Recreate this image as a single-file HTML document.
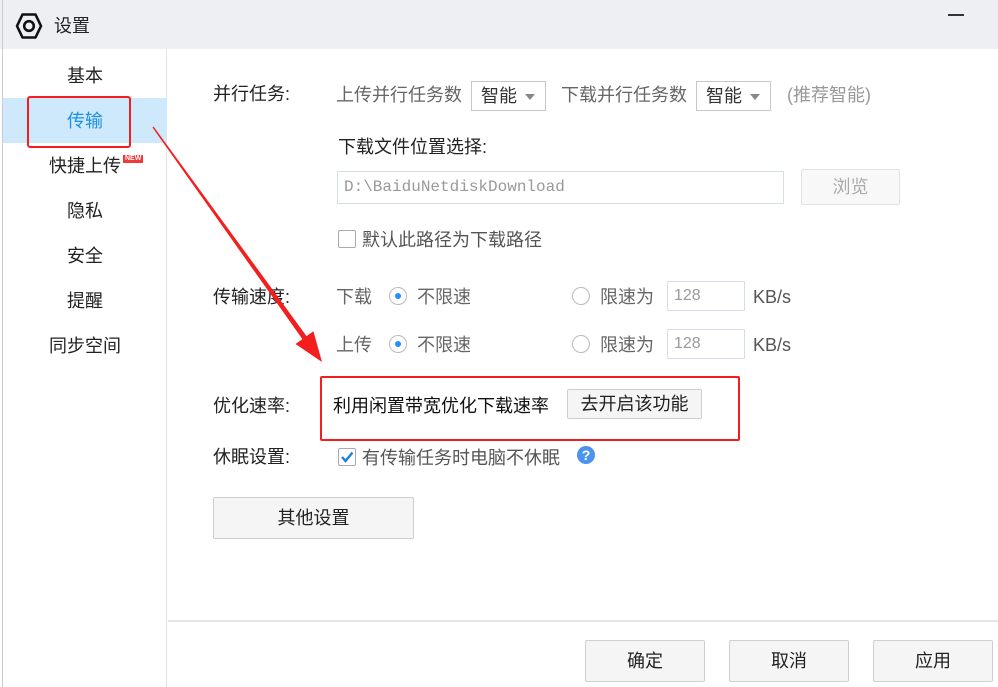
<!DOCTYPE html>
<html><head><meta charset="utf-8"><style>
*{margin:0;padding:0;box-sizing:border-box}
body{width:998px;height:687px;background:#fff;font-family:"Liberation Sans","Noto Sans CJK SC",sans-serif;position:relative;overflow:hidden;color:#333}
.a{position:absolute;white-space:nowrap;font-size:18px;line-height:20px}
.title{position:absolute;left:0;top:0;width:998px;height:49px;background:#eeeff3}
.side{position:absolute;left:2px;top:49px;width:165px;height:638px;border-right:1px solid #e4e4e4}
.btn{position:absolute;background:#f5f5f5;border:1px solid #cfcfcf;border-radius:2px;text-align:center;font-size:18px}
.sel{position:absolute;border:1px solid #c8c8c8;background:#fff;font-size:18px;height:30px;line-height:28px;padding-left:9px}
.sel:after{content:"";position:absolute;right:10px;top:12px;border-left:5px solid transparent;border-right:5px solid transparent;border-top:6px solid #888}
.inp{position:absolute;border:1px solid #d5dde8;background:#fff;color:#999;font-size:16px;padding-left:6px}
.radio{position:absolute;width:18px;height:18px;border:1px solid #bbb;border-radius:50%;background:#fff}
.radio.on:after{content:"";position:absolute;left:5px;top:5px;width:6px;height:6px;border-radius:50%;background:#1e90ff}
.chk{position:absolute;width:18px;height:18px;border:1px solid #aaa;border-radius:2px;background:#fff}
</style></head><body>
<div class="title"></div>
<div style="position:absolute;left:2px;top:0;width:1px;height:687px;background:#ccc"></div>
<svg style="position:absolute;left:15px;top:12px" width="28" height="28" viewBox="0 0 28 28"><polygon points="7.5,2.5 20.5,2.5 26,14 20.5,25.5 7.5,25.5 2,14" fill="none" stroke="#111" stroke-width="2.6" stroke-linejoin="round"/><circle cx="14" cy="14" r="4.8" fill="none" stroke="#111" stroke-width="2.6"/></svg>
<div class="a" style="left:54px;top:16px;color:#222">设置</div>
<div style="position:absolute;left:948px;top:14px;width:16px;height:1.5px;background:#333"></div>
<div class="side"></div>
<div style="position:absolute;left:3px;top:98px;width:164px;height:45px;background:#cde9fb"></div>
<div style="position:absolute;left:27px;top:96px;width:104px;height:52px;border:2px solid #f31f1f;border-radius:3px"></div>
<div class="a" style="left:67px;top:66px;color:#222">基本</div>
<div class="a" style="left:67px;top:111px;color:#1e90e0">传输</div>
<div class="a" style="left:49px;top:156px;color:#222">快捷上传</div>
<div style="position:absolute;left:123px;top:155px;background:#ee3a3a;color:#fff;font-size:7px;line-height:8px;padding:0 2px;font-weight:bold">NEW</div>
<div class="a" style="left:67px;top:201px;color:#222">隐私</div>
<div class="a" style="left:67px;top:246px;color:#222">安全</div>
<div class="a" style="left:67px;top:291px;color:#222">提醒</div>
<div class="a" style="left:49px;top:336px;color:#222">同步空间</div>

<div class="a" style="left:213px;top:84px;color:#222">并行任务:</div>
<div class="a" style="left:336px;top:85px;color:#666">上传并行任务数</div>
<div class="sel" style="left:471px;top:81px;width:75px">智能</div>
<div class="a" style="left:561px;top:85px;color:#666">下载并行任务数</div>
<div class="sel" style="left:696px;top:81px;width:75px">智能</div>
<div class="a" style="left:787px;top:85px;color:#999">(推荐智能)</div>
<div class="a" style="left:338px;top:137px;color:#222">下载文件位置选择:</div>
<div class="inp" style="left:337px;top:171px;width:447px;height:33px;line-height:31px;font-family:'Liberation Mono',monospace">D:\BaiduNetdiskDownload</div>
<div class="btn" style="left:801px;top:169px;width:99px;height:36px;line-height:34px;color:#aaa;background:#f8f8f8;border-color:#e2e2e2">浏览</div>
<div class="chk" style="left:338px;top:230px"></div>
<div class="a" style="left:362px;top:230px;color:#555">默认此路径为下载路径</div>

<div class="a" style="left:213px;top:287px;color:#222">传输速度:</div>
<div class="a" style="left:336px;top:287px;color:#666">下载</div>
<div class="radio on" style="left:389px;top:287px"></div>
<div class="a" style="left:417px;top:287px;color:#666">不限速</div>
<div class="radio" style="left:572px;top:287px"></div>
<div class="a" style="left:600px;top:287px;color:#666">限速为</div>
<div class="inp" style="left:667px;top:281px;width:78px;height:30px;line-height:28px">128</div>
<div class="a" style="left:753px;top:287px;color:#555">KB/s</div>
<div class="a" style="left:336px;top:335px;color:#666">上传</div>
<div class="radio on" style="left:389px;top:335px"></div>
<div class="a" style="left:417px;top:335px;color:#666">不限速</div>
<div class="radio" style="left:572px;top:335px"></div>
<div class="a" style="left:600px;top:335px;color:#666">限速为</div>
<div class="inp" style="left:667px;top:329px;width:78px;height:30px;line-height:28px">128</div>
<div class="a" style="left:753px;top:335px;color:#555">KB/s</div>

<div class="a" style="left:213px;top:396px;color:#222">优化速率:</div>
<div style="position:absolute;left:320px;top:376px;width:420px;height:65px;border:2px solid #f31f1f;border-radius:2px"></div>
<div class="a" style="left:333px;top:396px;color:#111">利用闲置带宽优化下载速率</div>
<div class="btn" style="left:567px;top:389px;width:135px;height:30px;line-height:28px;color:#222">去开启该功能</div>

<div class="a" style="left:213px;top:447px;color:#222">休眠设置:</div>
<div class="chk" style="left:338px;top:448px"><svg width="16" height="16" style="position:absolute;left:0;top:0"><path d="M3 8 L6.5 12 L13.5 3.5" fill="none" stroke="#1e7fe0" stroke-width="2.4"/></svg></div>
<div class="a" style="left:362px;top:448px;color:#555">有传输任务时电脑不休眠</div>
<div style="position:absolute;left:577px;top:446px;width:18px;height:18px;border-radius:50%;background:#4b93ef;color:#fff;font-size:14px;font-weight:bold;text-align:center;line-height:18px">?</div>

<div class="btn" style="left:213px;top:497px;width:201px;height:42px;line-height:40px;color:#222">其他设置</div>

<div style="position:absolute;left:168px;top:620px;width:830px;height:2px;background:#e6e6e6"></div>
<div class="btn" style="left:585px;top:640px;width:120px;height:42px;line-height:40px;color:#222">确定</div>
<div class="btn" style="left:729px;top:640px;width:120px;height:42px;line-height:40px;color:#222">取消</div>
<div class="btn" style="left:873px;top:640px;width:120px;height:42px;line-height:40px;color:#222">应用</div>

<svg style="position:absolute;left:0;top:0" width="998" height="687"><polygon points="152.4,127.4 153.6,126.6 306.5,336.1 313.4,331.2 322,362 295.5,344 302.4,339.1" fill="#f31f1f"/></svg>
</body></html>
